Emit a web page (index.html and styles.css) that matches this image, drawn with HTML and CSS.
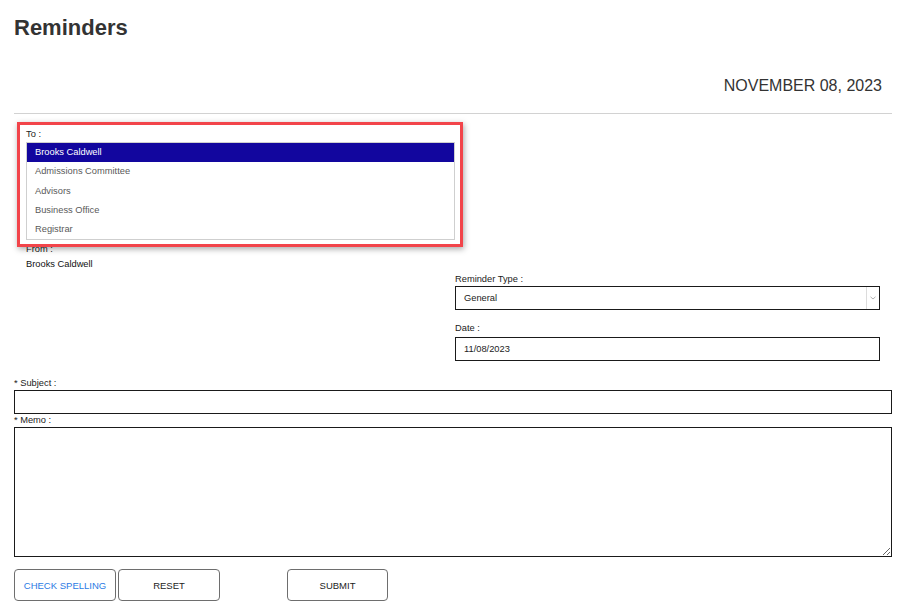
FILE: index.html
```html
<!DOCTYPE html>
<html lang="en">
<head>
<meta charset="utf-8">
<title>Reminders</title>
<link rel="stylesheet" href="styles.css">
</head>
<body>
<div class="page">
  <h1 class="title">Reminders</h1>
  <div class="today">NOVEMBER 08, 2023</div>
  <div class="rule"></div>

  <div class="to-field">
    <div class="label label-to">To :</div>
    <div class="listbox">
      <div class="option selected">Brooks Caldwell</div>
      <div class="option">Admissions Committee</div>
      <div class="option">Advisors</div>
      <div class="option">Business Office</div>
      <div class="option">Registrar</div>
    </div>
    <div class="highlight"></div>
  </div>

  <div class="from">
    <div class="label label-from">From :</div>
    <div class="value">Brooks Caldwell</div>
  </div>

  <div class="right-col">
    <div class="label label-tight">Reminder Type :</div>
    <div class="select">
      <span class="select-text">General</span>
      <span class="select-arrow">
        <svg width="6" height="4" viewBox="0 0 6 4"><path d="M0.5 0.8 L3 3 L5.5 0.8" fill="none" stroke="#b0b0b0" stroke-width="1"/></svg>
      </span>
    </div>
    <div class="label label-date">Date :</div>
    <input class="field" type="text" value="11/08/2023">
  </div>

  <div class="label label-subject">* Subject :</div>
  <input class="field full" type="text">
  <div class="label label-tight">* Memo :</div>
  <textarea class="memo"></textarea>

  <div class="buttons">
    <button class="btn btn-spell">CHECK SPELLING</button>
    <button class="btn btn-reset">RESET</button>
    <button class="btn btn-submit">SUBMIT</button>
  </div>
</div>
</body>
</html>
```
FILE: styles.css
```css
* { box-sizing: border-box; }

body {
  margin: 0;
  background: #fff;
  color: #222;
  font-family: "Liberation Sans", Arial, sans-serif;
}

.page {
  padding: 15px 14px 0 14px;
}

.title {
  margin: 0;
  font-size: 22px;
  line-height: 26px;
  font-weight: bold;
  color: #333;
}

.today {
  margin-top: 35px;
  padding-right: 10px;
  text-align: right;
  font-size: 16px;
  line-height: 20px;
  color: #333;
}

.rule {
  margin-top: 17px;
  height: 1px;
  background: #d2d2d2;
}

.label {
  font-size: 9.3px;
  line-height: 12px;
  color: #222;
}

.label-to { margin-bottom: 2px; }
.label-from { margin-bottom: 3px; }
.label-tight { margin-bottom: 1px; }
.label-date { margin-top: 12px; margin-bottom: 3px; }
.label-subject { margin-top: 16px; margin-bottom: 1px; }

.to-field {
  position: relative;
  margin: 14px 0 0 12px;
  width: 429px;
}

.listbox {
  border: 1px solid #cfcfcf;
  height: 98px;
  background: #fff;
}

.option {
  height: 19.3px;
  line-height: 19.3px;
  padding-left: 8px;
  font-size: 9.3px;
  color: #5a5a5a;
}

.option.selected {
  background: #12069e;
  color: #fff;
}

.highlight {
  position: absolute;
  left: -9px;
  top: -6px;
  right: -8px;
  bottom: -7px;
  border: 3px solid #f2444a;
  box-shadow: 1px 2px 6px rgba(0, 0, 0, 0.35);
  pointer-events: none;
}

.from {
  margin: 3px 0 0 12px;
}

.value {
  font-size: 9.3px;
  line-height: 12px;
  color: #111;
}

.right-col {
  margin: 3px 0 0 441px;
  width: 425px;
}

.select {
  display: flex;
  align-items: stretch;
  height: 24px;
  border: 1px solid #1a1a1a;
  background: #fff;
}

.select-text {
  flex: 1;
  padding-left: 8px;
  font-size: 9.3px;
  line-height: 22px;
  color: #222;
}

.select-arrow {
  width: 13px;
  border-left: 1px solid #dcdcdc;
  display: flex;
  align-items: center;
  justify-content: center;
}

.field {
  display: block;
  width: 100%;
  height: 24px;
  margin: 0;
  padding: 0 8px;
  border: 1px solid #1a1a1a;
  border-radius: 0;
  outline: none;
  background: #fff;
  font-family: "Liberation Sans", Arial, sans-serif;
  font-size: 9.3px;
  color: #222;
}

.memo {
  display: block;
  width: 100%;
  height: 130px;
  margin: 0;
  padding: 4px 8px;
  border: 1px solid #1a1a1a;
  border-radius: 0;
  outline: none;
  background: #fff;
  font-family: "Liberation Sans", Arial, sans-serif;
  font-size: 9.3px;
}

.buttons {
  display: flex;
  margin-top: 12px;
}

.btn {
  height: 32px;
  width: 102px;
  padding: 0;
  border: 1px solid #6e6e6e;
  border-radius: 4px;
  background: #fff;
  font-family: "Liberation Sans", Arial, sans-serif;
  font-size: 9.5px;
  color: #222;
}

.btn-spell { color: #2b7be4; }
.btn-reset { margin-left: 2px; }
.btn-submit { margin-left: 67px; width: 101px; }
```
